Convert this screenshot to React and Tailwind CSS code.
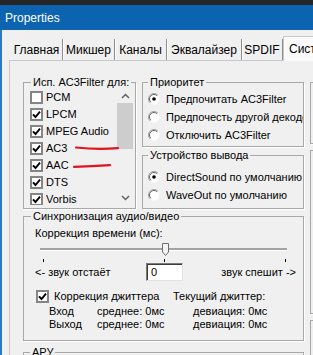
import React from 'react';

// Маленькие "классические" контролы диалога
function Check({ on }) {
    return (
        <span className="w-[13px] h-[13px] shrink-0 border-2 border-[#858585] bg-white flex items-center justify-center">
            {on && (
                <svg width="9" height="9" viewBox="0 0 9 9">
                    <path d="M1 4.3 L3.5 7 L8 1.6" stroke="#000" strokeWidth="1.9" fill="none" />
                </svg>
            )}
        </span>
    );
}

function Radio({ on }) {
    return (
        <svg width="12" height="12" viewBox="0 0 12 12" className="shrink-0">
            <circle cx="6" cy="6" r="5.5" fill="#fff" />
            <path d="M2.1 9.9 A5.5 5.5 0 0 1 9.9 2.1" stroke="#a0a0a0" strokeWidth="1" fill="none" />
            <path d="M2.8 9.2 A4.5 4.5 0 0 1 9.2 2.8" stroke="#696969" strokeWidth="1" fill="none" />
            {on && <circle cx="6" cy="6" r="1.8" fill="#000" />}
        </svg>
    );
}

function Chevron({ up }) {
    return (
        <svg width="9" height="6" viewBox="0 0 9 6">
            <polyline points={up ? '1,5 4.5,1.5 8,5' : '1,1 4.5,4.5 8,1'} stroke="#606060" strokeWidth="1.5" fill="none" />
        </svg>
    );
}

const group = 'border border-[#a8a8a8] shadow-[1px_1px_0_#fff] min-w-0';
const legend = 'px-[2px] leading-[13px] bg-[#f0f0f0]';

export default function App() {
    const formats = [
        ['PCM', false],
        ['LPCM', true],
        ['MPEG Audio', true],
        ['AC3', true],
        ['AAC', true],
        ['DTS', true],
        ['Vorbis', true],
    ];
    const tabs = [
        ['Главная', 'w-[52px]'],
        ['Микшер', 'w-[52px]'],
        ['Каналы', 'w-[52px]'],
        ['Эквалайзер', 'w-[75px]'],
        ['SPDIF', 'w-[41px]'],
    ];

    return (
        <div className="relative w-[313px] h-[355px] overflow-hidden bg-[#f0f0f0] flex flex-col text-black text-[11px] font-['Liberation_Sans',Arial,sans-serif]">
            <div className="h-[5px] shrink-0 bg-[#262626]" />
            <div className="h-[25px] shrink-0 bg-[#0c63b0] text-white text-[12px] pl-[5px] flex items-center">Properties</div>

            <div className="flex-1 min-h-0 border-l-2 border-[#2a7ac4] pl-[7px] pt-[6px] flex flex-col">
                {/* вкладки */}
                <div className="flex items-end h-[24px] pl-[2px] text-[12px] shrink-0">
                    {tabs.map(([t, w]) => (
                        <div key={t} className={`${w} h-[21px] shrink-0 flex items-center justify-center border-r border-[#8c8c8c] shadow-[1px_0_0_#fff]`}>
                            {t}
                        </div>
                    ))}
                    <div className="relative z-10 -mb-px h-[25px] flex-1 bg-[#fafafa] border-l border-t border-[#c8c8c8] pl-[5px] flex items-center whitespace-nowrap overflow-hidden">
                        Система
                    </div>
                </div>

                {/* панель вкладки */}
                <div className="flex-1 border-t border-l border-[#c8c8c8] bg-[#f0f0f0] pl-[13px] pt-[15px] flex gap-[6px]">
                    <div className="w-[281px] shrink-0 flex flex-col">
                        <div className="flex gap-[6px]">
                            <fieldset className={`${group} w-[113px] shrink-0`}>
                                <legend className={`${legend} ml-[7px]`}>Исп. AC3Filter для:</legend>
                                <div className="flex h-[116px] mb-[3px] pl-[6px] pr-[2px]">
                                    <div className="flex-1 overflow-hidden">
                                        {formats.map(([name, on]) => (
                                            <div key={name} className="h-[17px] flex items-center gap-[3px] whitespace-nowrap">
                                                <Check on={on} />
                                                <span>{name}</span>
                                            </div>
                                        ))}
                                    </div>
                                    <div className="w-[16px] flex flex-col">
                                        <div className="h-[14px] flex items-center justify-center"><Chevron up /></div>
                                        <div className="h-[46px] bg-[#cdcdcd]" />
                                        <div className="flex-1" />
                                        <div className="h-[14px] flex items-center justify-center"><Chevron /></div>
                                    </div>
                                </div>
                            </fieldset>

                            <div className="w-[162px] shrink-0 flex flex-col gap-[2px]">
                                <fieldset className={group}>
                                    <legend className={`${legend} ml-[5px]`}>Приоритет</legend>
                                    <div className="pt-[1px] pb-[2px] pl-[5px] overflow-hidden">
                                        {[['Предпочитать AC3Filter', true], ['Предпочесть другой декодер', false], ['Отключить AC3Filter', false]].map(([t, on]) => (
                                            <div key={t} className="h-[18px] flex items-center gap-[6px] whitespace-nowrap">
                                                <Radio on={on} />
                                                <span>{t}</span>
                                            </div>
                                        ))}
                                    </div>
                                </fieldset>
                                <fieldset className={group}>
                                    <legend className={`${legend} ml-[5px]`}>Устройство вывода</legend>
                                    <div className="pt-[6px] pb-[4px] pl-[5px] overflow-hidden">
                                        {[['DirectSound по умолчанию', true], ['WaveOut по умолчанию', false]].map(([t, on]) => (
                                            <div key={t} className="h-[18px] flex items-center gap-[6px] whitespace-nowrap">
                                                <Radio on={on} />
                                                <span>{t}</span>
                                            </div>
                                        ))}
                                    </div>
                                </fieldset>
                            </div>
                        </div>

                        {/* синхронизация */}
                        <fieldset className={`${group} mt-[1px]`}>
                            <legend className={`${legend} ml-[7px]`}>Синхронизация аудио/видео</legend>
                            <div className="pt-[3px] pl-[11px] leading-[14px]">Коррекция времени (мс):</div>
                            <div className="relative h-[23px] ml-[16px] w-[247px]">
                                <div className="absolute top-[8px] left-0 right-0 h-[3px] bg-[#a3a3a3] border-b border-white" />
                                <svg width="7" height="13" viewBox="0 0 7 13" className="absolute left-[122px] top-[3px]">
                                    <polygon points="0.5,0.5 6.5,0.5 6.5,9 3.5,12.5 0.5,9" fill="#f4f4f4" stroke="#6e6e6e" strokeWidth="1" />
                                </svg>
                                <div className="absolute left-[3px] top-[19px] w-px h-[3px] bg-black" />
                                <div className="absolute left-[124px] top-[19px] w-px h-[3px] bg-black" />
                                <div className="absolute left-[245px] top-[19px] w-px h-[3px] bg-black" />
                            </div>
                            <div className="h-[18px] flex items-center">
                                <div className="w-[122px] pl-[11px] whitespace-nowrap">&lt;- звук отстаёт</div>
                                <div className="w-[37px] h-[18px] bg-white border-t border-l border-[#7a7a7a] border-r-[#e3e3e3] border-b-[#e3e3e3] border-r border-b shadow-[inset_1px_1px_0_#3c3c3c] pl-[4px] flex items-center">0</div>
                                <div className="flex-1 text-right pr-[7px] whitespace-nowrap">звук спешит -&gt;</div>
                            </div>
                            <div className="mt-[8px] h-[14px] flex items-center pl-[12px]">
                                <Check on />
                                <span className="w-[119px] ml-[5px] whitespace-nowrap">Коррекция джиттера</span>
                                <span className="whitespace-nowrap">Текущий джиттер:</span>
                            </div>
                            <div className="mt-[2px] pb-[9px] pl-[25px]">
                                {['Вход', 'Выход'].map((r) => (
                                    <div key={r} className="h-[13px] flex items-center whitespace-nowrap">
                                        <span className="w-[48px]">{r}</span>
                                        <span className="w-[96px]">среднее: 0мс</span>
                                        <span>девиация: 0мс</span>
                                    </div>
                                ))}
                            </div>
                        </fieldset>

                        <fieldset className={`${group} mt-[5px]`}>
                            <legend className={`${legend} ml-[6px]`}>АРУ</legend>
                            <div className="h-[40px]" />
                        </fieldset>
                    </div>

                    {/* правая колонка, обрезана окном */}
                    <div className="w-[60px] shrink-0 flex flex-col">
                        <div className={`${group} mt-[6px] h-[62px]`} />
                        <div className={`${group} mt-[6px] h-[164px]`} />
                        <div className={`${group} mt-[6px] h-[40px]`} />
                    </div>
                </div>
            </div>

            {/* красные пометки поверх скриншота */}
            <svg className="absolute inset-0 pointer-events-none" width="313" height="355" viewBox="0 0 313 355">
                <path d="M76 147.5 Q97 149.8 118 148.2" stroke="#e0141c" strokeWidth="2.2" strokeLinecap="round" fill="none" />
                <path d="M74 166.8 Q92 166.6 110 165.2" stroke="#e0141c" strokeWidth="2.2" strokeLinecap="round" fill="none" />
            </svg>
        </div>
    );
}
